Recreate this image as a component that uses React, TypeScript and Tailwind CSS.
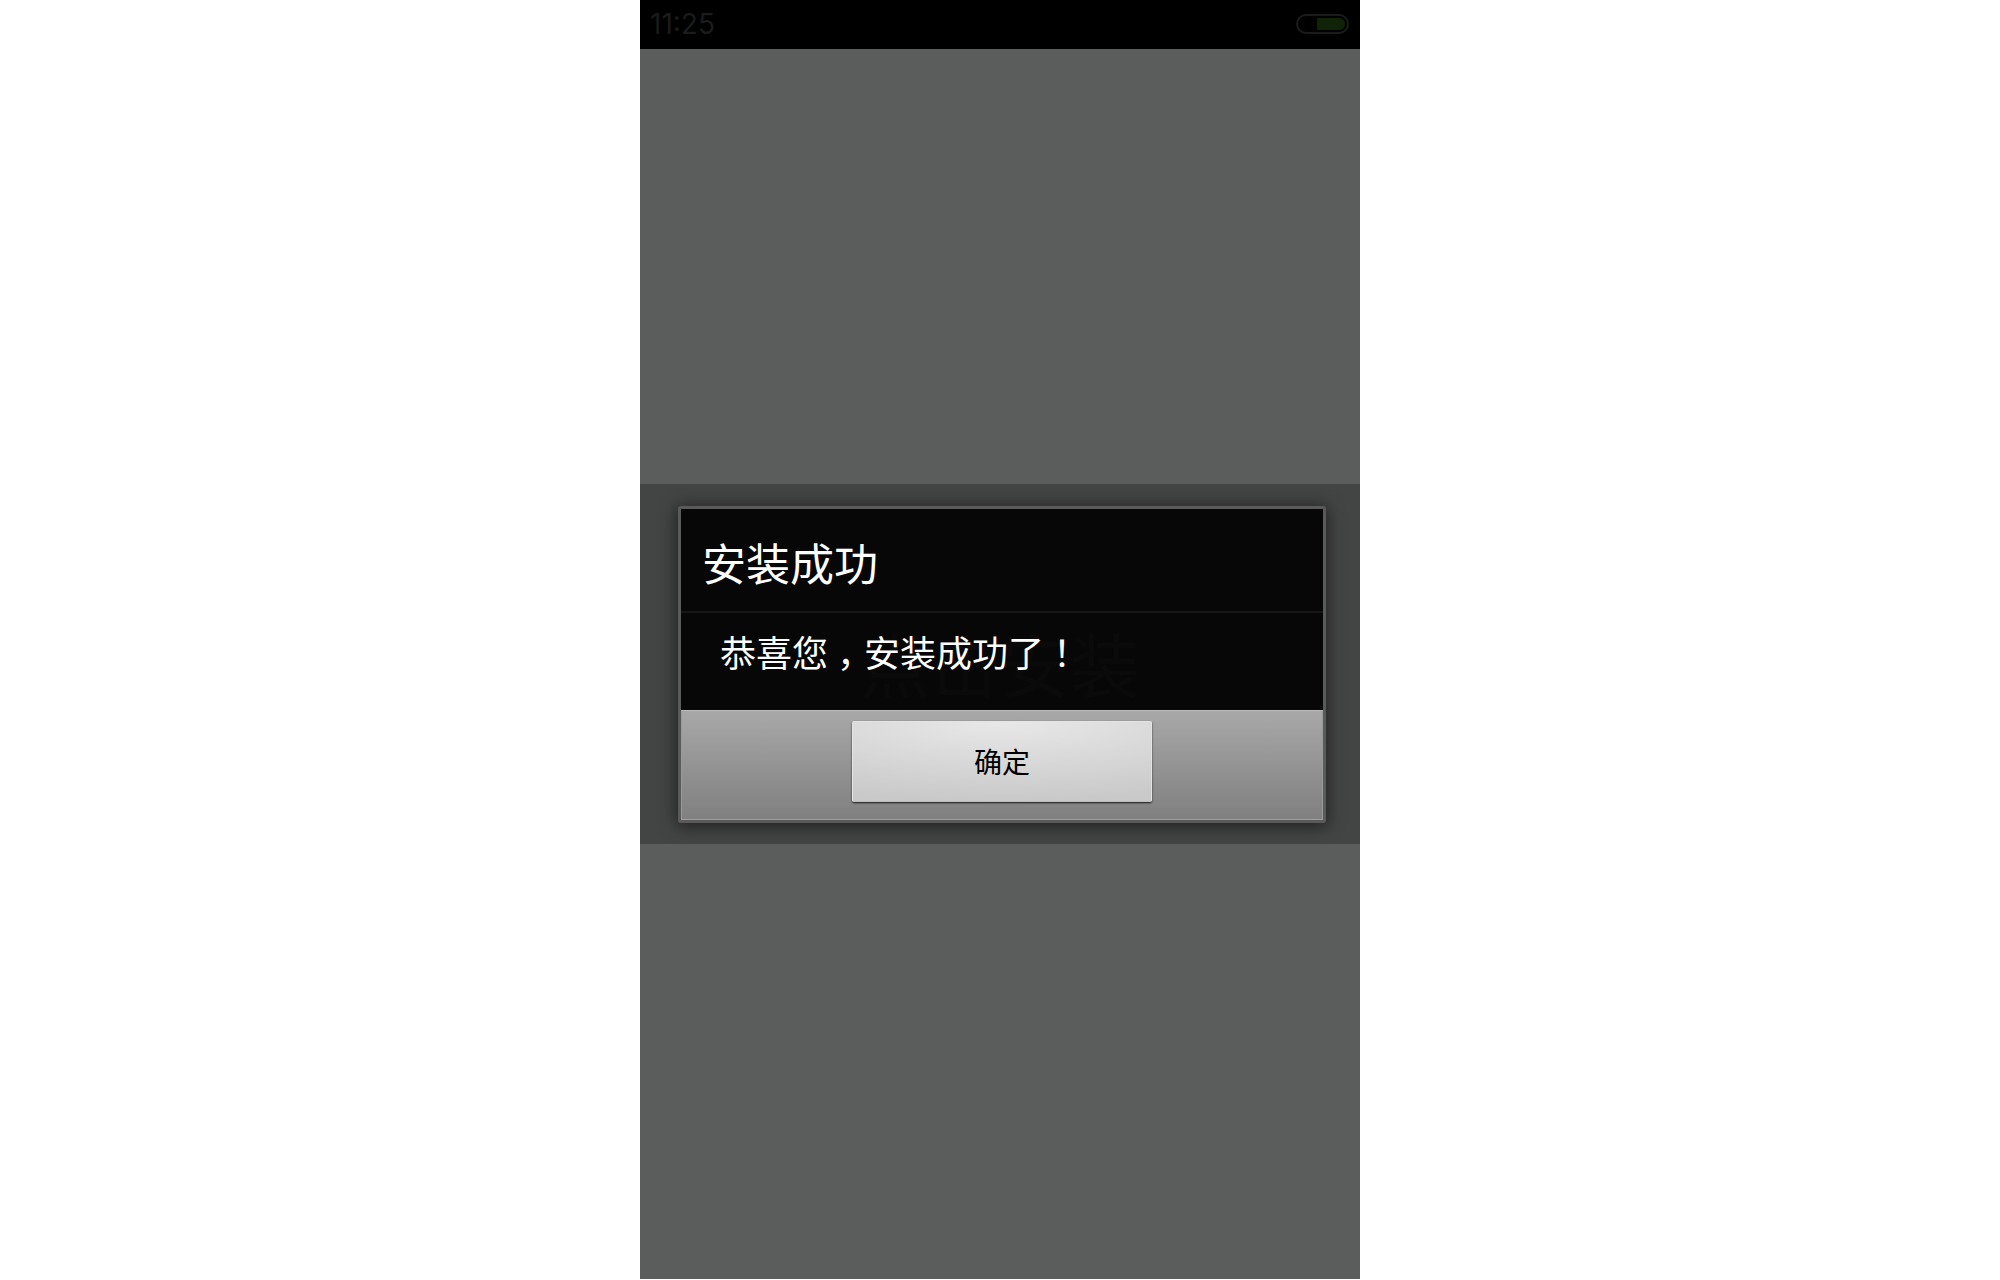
import React, { useState } from "react";

/**
 * App.tsx
 * Install screen with a confirmation dialog shown once the install is done.
 */

const BatteryIcon: React.FC = () => (
  <svg width="54" height="20" viewBox="0 0 54 20" fill="none" aria-hidden="true">
    <rect x="1" y="1" width="51" height="18" rx="9" stroke="#1b1b1b" strokeWidth="2" />
    <path d="M21 4h22a6 6 0 0 1 0 12H21z" fill="#102307" />
  </svg>
);

const StatusBar: React.FC = () => (
  <header className="flex h-[49px] shrink-0 items-center justify-between bg-black px-[10px] pb-px">
    <time className="font-['Inter',sans-serif] text-[28px] leading-8 text-[#1b1b1b]">
      11:25
    </time>
    <BatteryIcon />
  </header>
);

interface DialogProps {
  title: string;
  children: React.ReactNode;
  onConfirm: () => void;
}

const Dialog: React.FC<DialogProps> = ({ title, children, onConfirm }) => (
  <div
    role="dialog"
    aria-labelledby="dialog-title"
    className="w-full rounded-[3px] border-[3px] border-[#5a5a5a] shadow-[0_2px_16px_2px_rgba(0,0,0,0.5)]"
  >
    <div className="bg-black/90 text-white">
      <h1
        id="dialog-title"
        className="border-b-2 border-[#161616] px-[21px] pt-[26px] pb-[22px] text-[44px] leading-[54px]"
      >
        {title}
      </h1>
      <div className="px-[39px] pt-[14px] pb-[35px] text-[36px] leading-[48px]">{children}</div>
    </div>
    <div className="flex justify-center border border-t-[#bcbcbc] border-r-[#9a9a9a] border-b-[#9f9f9f] border-l-[#9a9a9a] bg-linear-to-b from-[#a8a8a8] to-[#808080] pt-[10px] pb-[17px]">
      <button
        type="button"
        onClick={onConfirm}
        className="h-[81px] w-[300px] rounded-[2px] border border-[#e4e4e4] border-b-[#bdbdbd] bg-[radial-gradient(120%_100%_at_top,#e8e8e8,#c9c9c9)] text-[28px] leading-9 text-black shadow-[0_1px_2px_rgba(0,0,0,0.8)]"
      >
        确定
      </button>
    </div>
  </div>
);

export default function App() {
  const [open, setOpen] = useState(true);

  return (
    <div className="flex min-h-screen justify-center bg-white pb-px font-['Noto_Sans_CJK_SC',sans-serif]">
      <div className="relative flex w-[36%] flex-col bg-[#5b5d5c]">
        <StatusBar />
        <main className="flex flex-1 flex-col justify-center">
          <button
            type="button"
            onClick={() => setOpen(true)}
            className="h-[360px] w-full bg-[#434544] pb-1 text-[70px] text-[#626462]"
          >
            点击安装
          </button>
        </main>

        {/* Dialog layer */}
        {open && (
          <div className="absolute inset-x-0 top-[49px] bottom-0 flex items-center pr-[34px] pl-[38px]">
            <Dialog title="安装成功" onConfirm={() => setOpen(false)}>
              <p>
                恭喜您<span className="pr-[9px] pl-[9px] [font-feature-settings:'halt']">，</span>安装成功了
                <span className="font-['Noto_Sans_CJK_TC',sans-serif]">！</span>
              </p>
            </Dialog>
          </div>
        )}
      </div>
    </div>
  );
}
